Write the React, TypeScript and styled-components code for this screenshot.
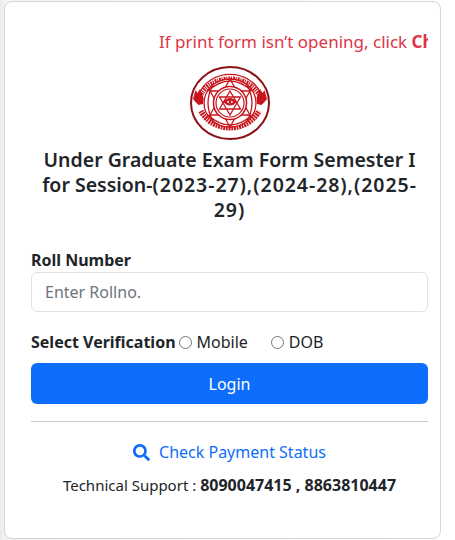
import React from "react";
import styled, { createGlobalStyle } from "styled-components";
import { FaSearch } from "react-icons/fa";

const Global = createGlobalStyle`
  html, body { margin: 0; padding: 0; background: #fff; }
  body { font-family: "Noto Sans", "Open Sans", sans-serif; color: #212529; }
  * { box-sizing: border-box; }
`;
const Page = styled.div`
  width: 455px; height: 540px; overflow: hidden; display: flex;
  background: linear-gradient(90deg, #e9ebee 0, #f1f2f4 4px, #fff 441px);
  padding: 1px 14px 0 4px;
`;
const Card = styled.main`
  width: 437px; height: 538px; background: #fff;
  border: 1px solid #d6d6d6; border-radius: 8px;
  padding: 28px 12px 0 26px; display: flex; flex-direction: column;
`;
const Ticker = styled.div`
  width: 397px; height: 24px; overflow: hidden; white-space: nowrap;
  color: #dc3545; font-size: 17px; line-height: 24px; padding-left: 128px;
  b { font-weight: 700; }
`;
const LogoWrap = styled.div`
  display: flex; justify-content: center; margin-top: 12px;
`;
const Heading = styled.h1`
  margin: 6px 0 0; padding: 0 11px; width: 397px; font-size: 19.5px; line-height: 25px;
  font-weight: 600; text-align: center; color: #212529;
`;
const Years = styled.span`
  letter-spacing: 0.95px;
`;
const Label = styled.label`
  display: block; margin-top: 26px; font-size: 16px; line-height: 24px; font-weight: 700;
`;
const Input = styled.input`
  display: block; width: 397px; height: 40px; margin-top: 0;
  border: 1px solid #dee2e6; border-radius: 6px; padding: 0 13px;
  font: 400 16px "Noto Sans", sans-serif; color: #212529; background: #fff;
  &::placeholder { color: #6c757d; opacity: 1; }
`;
const VerifyRow = styled.div`
  display: flex; align-items: center; margin-top: 18px; height: 24px; font-size: 16px;
`;
const VerifyTitle = styled.span` font-weight: 700; margin-right: 3px; `;
const RadioLabel = styled.label<{ $gap: number }>`
  display: flex; align-items: center; margin-right: ${p => p.$gap}px; color: #212529;
`;
const Radio = styled.input`
  appearance: none; width: 13px; height: 13px; margin: 0 5px 0 0;
  border: 1px solid #767676; border-radius: 50%; background: #fff;
`;
const Button = styled.button`
  display: block; width: 397px; height: 41px; margin-top: 9px;
  background: #0d6efd; color: #fff; border: 0; border-radius: 6px;
  font: 400 16px "Noto Sans", sans-serif;
`;
const Rule = styled.hr`
  width: 397px; margin: 17px 0 0; border: 0; border-top: 1px solid #c8c9ca;
`;
const StatusLink = styled.a`
  display: flex; justify-content: center; align-items: center; gap: 9px;
  width: 397px; margin-top: 18px; height: 24px; color: #0d6efd; font-size: 16px; text-decoration: none;
`;
const Support = styled.p`
  width: 397px; margin: 9px 0 0; text-align: center; font-size: 15px; line-height: 24px; color: #212529;
  b { font-weight: 700; font-size: 16px; }
`;

const R = "#c8141b";
const Logo = () => (
  <svg width="80" height="75" viewBox="6 5 80 75" aria-hidden="true">
    <ellipse cx="46" cy="42" rx="39" ry="36" fill="#fff" stroke="#8a1216" strokeWidth="2" />
    {/* script band, top and bottom */}
    <path d="M15 33A33 30 0 0 1 77 33" fill="none" stroke={R} strokeWidth="1.2" />
    <path d="M15 34.5A33 29 0 0 1 77 34.5" fill="none" stroke={R} strokeWidth="5" strokeDasharray="1.8 .8 1 1" transform="translate(0 2.5)" />
    <path d="M17 50A32 29 0 0 0 75 50" fill="none" stroke={R} strokeWidth="5.5" strokeDasharray="1.6 .8 2 .8" />
    {/* side flames */}
    <path d="M9 38l2.500-9 2 3 2.500-4 3.500 9-.5 6-4.500 1-3-3z" fill={R} />
    <path d="M83 38l-2.500-9-2 3-2.500-4-3.500 9 .5 6 4.500 1 3-3z" fill={R} />
    {/* mandala */}
    <ellipse cx="46" cy="42" rx="26" ry="24" fill="#fff" stroke={R} strokeWidth="1.3" />
    <g fill="none" stroke={R} strokeWidth="1.3">
      <path d="M46 18L66 54H26Z M46 66L66 30H26Z" />
      <path d="M24 30Q46 10 68 30 M24 54Q46 74 68 54 M30 22Q18 42 30 62 M62 22Q74 42 62 62" />
      <circle cx="46" cy="42" r="16.500" fill="#fff" strokeWidth="1.500" />
      <circle cx="46" cy="42" r="14" strokeWidth="1.200" />
      <path d="M46 30L56.500 48H35.500Z M46 54L56.500 36H35.500Z" strokeWidth="1.300" />
    </g>
    <path d="M39 41q7-8 14 0q-7 7-14 0Z" fill={R} />
    <path d="M42.500 41q3.500-2.500 7 0q-3.500 2.500-7 0Z" fill="#fff" />
    <circle cx="46" cy="41" r="1.300" fill={R} />
  </svg>
);

export default function App() {
  return (
    <>
      <Global />
      <Page>
        <Card>
          <Ticker>If print form isn’t opening, click <b>Check</b></Ticker>
          <LogoWrap><Logo /></LogoWrap>
          <Heading>Under Graduate Exam Form Semester I for Session-<Years>(2023-27),(2024-28),(2025-29)</Years></Heading>
          <Label htmlFor="roll">Roll Number</Label>
          <Input id="roll" placeholder="Enter Rollno." />
          <VerifyRow>
            <VerifyTitle>Select Verification</VerifyTitle>
            <RadioLabel $gap={23}><Radio type="radio" name="v" />Mobile</RadioLabel>
            <RadioLabel $gap={0}><Radio type="radio" name="v" />DOB</RadioLabel>
          </VerifyRow>
          <Button type="button">Login</Button>
          <Rule />
          <StatusLink href="#"><FaSearch size={17} />Check Payment Status</StatusLink>
          <Support>Technical Support : <b>8090047415 , 8863810447</b></Support>
        </Card>
      </Page>
    </>
  );
}
